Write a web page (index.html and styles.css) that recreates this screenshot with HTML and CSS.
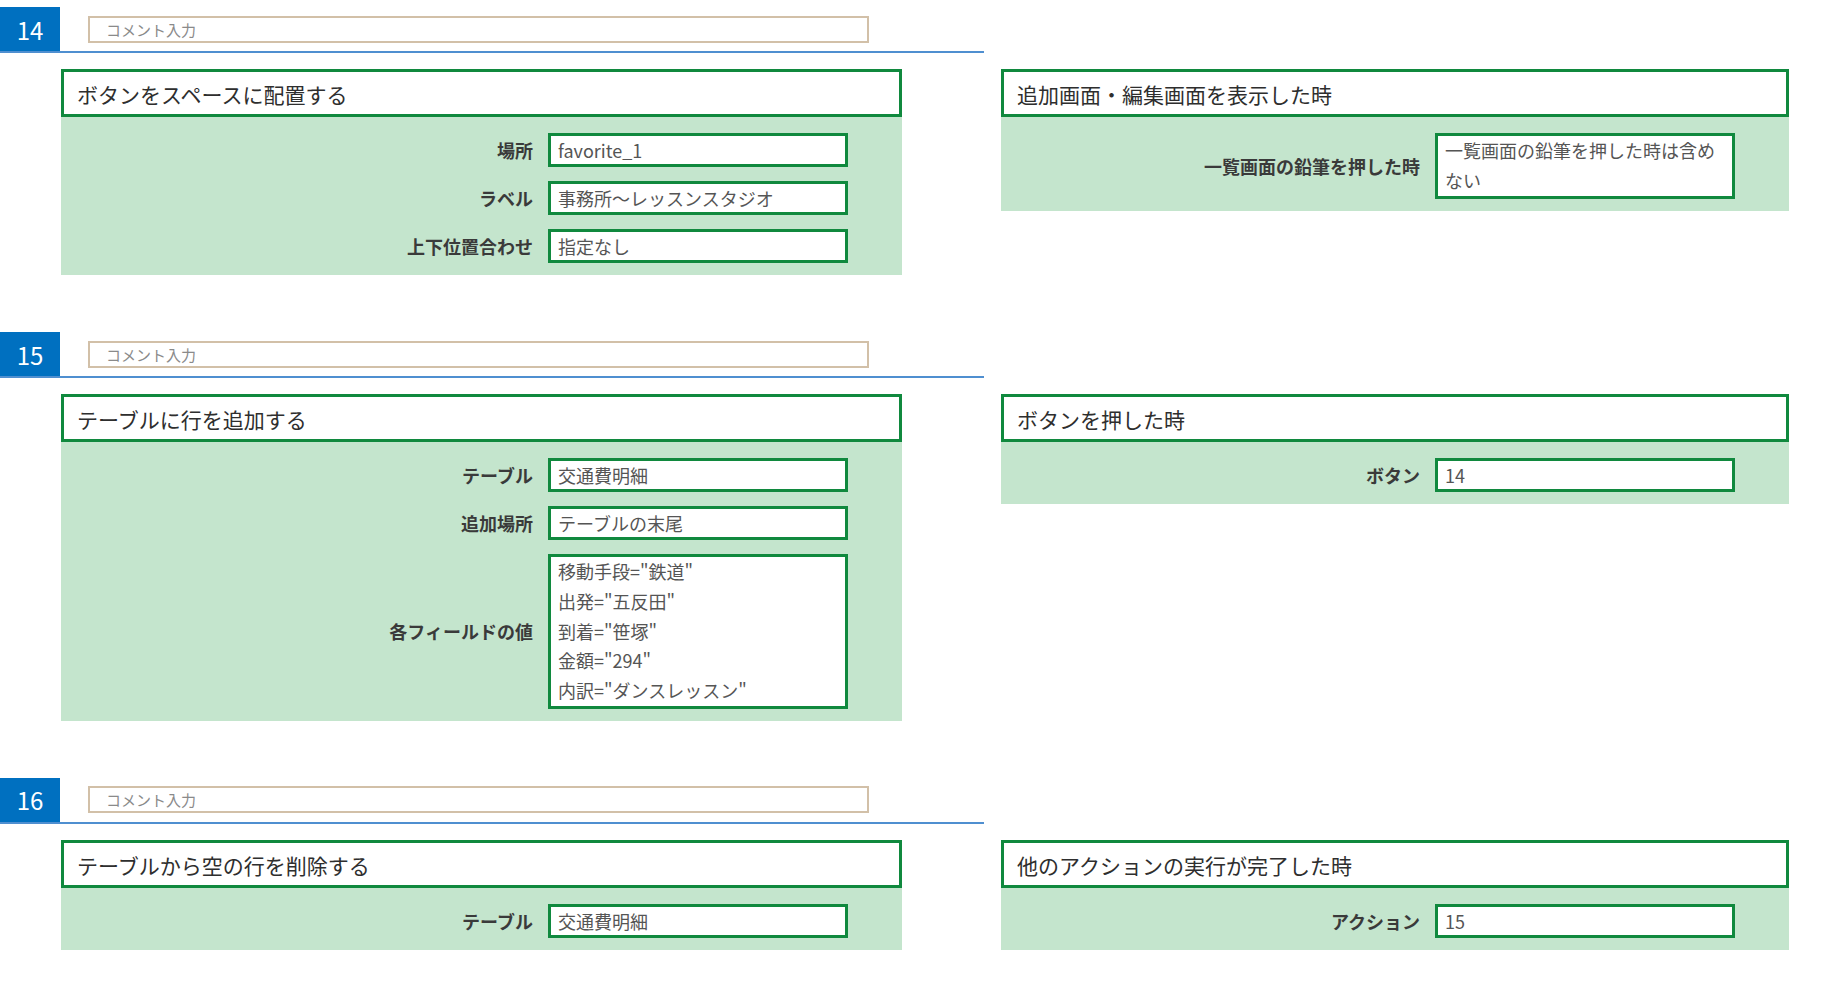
FILE: index.html
```html
<!DOCTYPE html>
<html lang="ja">
<head>
<meta charset="utf-8">
<title>アクション一覧</title>
<link rel="stylesheet" href="styles.css">
</head>
<body>
<div class="page">

  <section class="section">
    <div class="sec-head">
      <div class="num">14</div>
      <div class="comment">コメント入力</div>
    </div>
    <div class="cards">
      <div class="card card-left">
        <div class="card-head">ボタンをスペースに配置する</div>
        <div class="card-body">
          <div class="row"><span class="label">場所</span><div class="field">favorite_1</div></div>
          <div class="row"><span class="label">ラベル</span><div class="field">事務所〜レッスンスタジオ</div></div>
          <div class="row"><span class="label">上下位置合わせ</span><div class="field">指定なし</div></div>
        </div>
      </div>
      <div class="card card-right">
        <div class="card-head">追加画面・編集画面を表示した時</div>
        <div class="card-body">
          <div class="row"><span class="label">一覧画面の鉛筆を押した時</span><div class="field multi">一覧画面の鉛筆を押した時は含め<br>ない</div></div>
        </div>
      </div>
    </div>
  </section>

  <section class="section">
    <div class="sec-head">
      <div class="num">15</div>
      <div class="comment">コメント入力</div>
    </div>
    <div class="cards">
      <div class="card card-left">
        <div class="card-head">テーブルに行を追加する</div>
        <div class="card-body">
          <div class="row"><span class="label">テーブル</span><div class="field">交通費明細</div></div>
          <div class="row"><span class="label">追加場所</span><div class="field">テーブルの末尾</div></div>
          <div class="row"><span class="label">各フィールドの値</span><div class="field multi">移動手段="鉄道"<br>出発="五反田"<br>到着="笹塚"<br>金額="294"<br>内訳="ダンスレッスン"</div></div>
        </div>
      </div>
      <div class="card card-right">
        <div class="card-head">ボタンを押した時</div>
        <div class="card-body">
          <div class="row"><span class="label">ボタン</span><div class="field">14</div></div>
        </div>
      </div>
    </div>
  </section>

  <section class="section">
    <div class="sec-head">
      <div class="num">16</div>
      <div class="comment">コメント入力</div>
    </div>
    <div class="cards">
      <div class="card card-left">
        <div class="card-head">テーブルから空の行を削除する</div>
        <div class="card-body">
          <div class="row"><span class="label">テーブル</span><div class="field">交通費明細</div></div>
        </div>
      </div>
      <div class="card card-right">
        <div class="card-head">他のアクションの実行が完了した時</div>
        <div class="card-body">
          <div class="row"><span class="label">アクション</span><div class="field">15</div></div>
        </div>
      </div>
    </div>
  </section>

</div>
</body>
</html>
```

FILE: styles.css
```css
* {
  box-sizing: border-box;
}

html, body {
  margin: 0;
  padding: 0;
  background: #ffffff;
}

body {
  font-family: "Noto Sans CJK JP", "Noto Sans", sans-serif;
  color: #333333;
}

.page {
  padding-top: 7px;
}

.section {
  margin-bottom: 57px;
}

.sec-head {
  display: flex;
  align-items: center;
  width: 984px;
  height: 46px;
  border-bottom: 2px solid #4f8fd0;
}

.num {
  width: 60px;
  align-self: stretch;
  background: #0070c0;
  color: #ffffff;
  font-size: 24px;
  display: flex;
  align-items: center;
  justify-content: center;
}

.comment {
  margin-left: 28px;
  width: 781px;
  height: 27px;
  border: 2px solid #d2c0a8;
  background: #ffffff;
  color: #8a8a8a;
  font-size: 15px;
  line-height: 23px;
  padding-left: 16px;
}

.cards {
  display: flex;
  align-items: flex-start;
  gap: 99px;
  padding-left: 61px;
  margin-top: 16px;
}

.card-left {
  width: 841px;
}

.card-right {
  width: 788px;
}

.card-head {
  height: 48px;
  border: 3px solid #10893e;
  background: #ffffff;
  font-size: 21px;
  color: #2e2e2e;
  display: flex;
  align-items: center;
  padding-left: 13px;
  padding-top: 2px;
}

.card-body {
  background: #c4e5cd;
  padding: 16px 54px 12px 0;
  display: flex;
  flex-direction: column;
  align-items: flex-end;
  gap: 14px;
}

.row {
  display: flex;
  align-items: center;
  gap: 15px;
}

.label {
  font-size: 18px;
  font-weight: bold;
  color: #3a3a3a;
}

.field {
  width: 300px;
  border: 3px solid #10893e;
  background: #ffffff;
  padding: 0 7px;
  font-size: 18px;
  line-height: 28px;
  color: #555555;
  white-space: nowrap;
}

.field.multi {
  line-height: 29.8px;
}
```
